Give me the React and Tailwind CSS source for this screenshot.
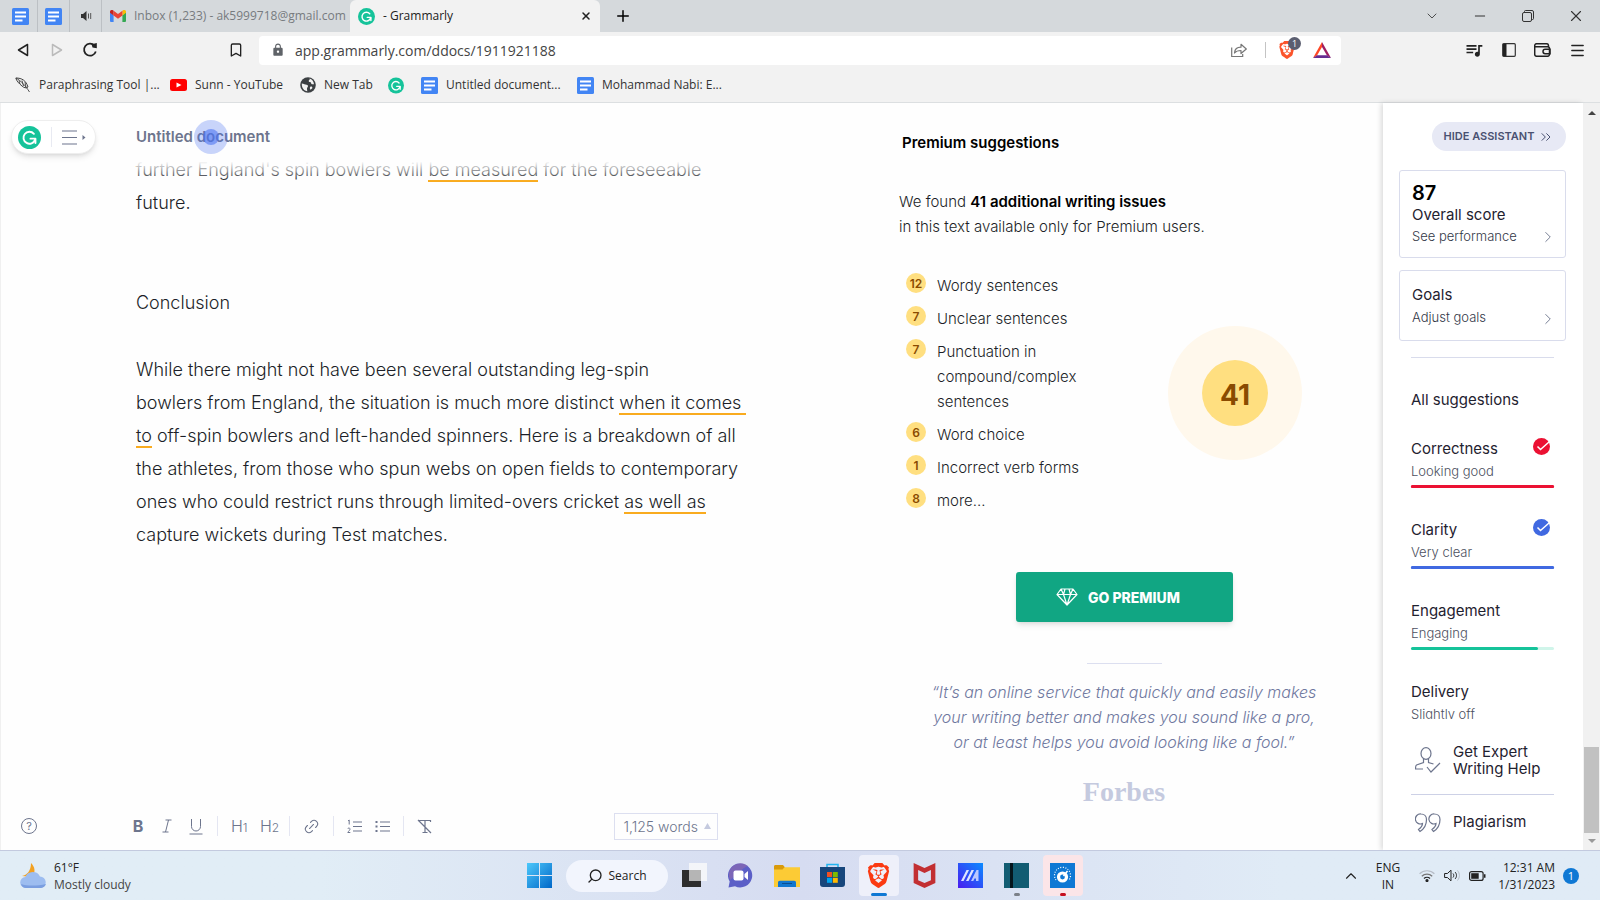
import {
    Bookmark,
    ChevronDown,
    ChevronRight,
    ChevronsRight,
    ChevronUp,
    Link2,
    Menu,
    Minus,
    Plus,
    Search,
    X,
} from "lucide-react";
import { SiBrave, SiMcafee } from "react-icons/si";
import { MdLock, MdOutlineQueueMusic } from "react-icons/md";

const GrammarlyLogo = ({ className }) => (
    <svg viewBox="0 0 24 24" className={className} aria-hidden="true">
        <circle cx="12" cy="12" r="12" fill="#15c39a" />
        <path
            d="M16.6 8.2A6.2 6.2 0 1 0 17.8 14.2"
            fill="none"
            stroke="#fff"
            strokeWidth="2"
            strokeLinecap="round"
        />
        <path d="M13 13.2h5.2v4.6" fill="none" stroke="#fff" strokeWidth="2" strokeLinecap="round" strokeLinejoin="round" />
    </svg>
);

const DocsIcon = () => (
    <svg viewBox="0 0 17 17" className="size-[17px] shrink-0" aria-hidden="true">
        <rect width="17" height="17" rx="1.5" fill="#4285f4" />
        <path d="M3 4.5h11M3 8.5h11M3 12.5h7.5" stroke="#fff" strokeWidth="1.8" />
    </svg>
);

const GmailIcon = () => (
    <svg viewBox="0 0 16 12" className="h-3 w-4 shrink-0" aria-hidden="true">
        <path d="M0 1.5V11a1 1 0 0 0 1 1h2.6V5.4Z" fill="#4285f4" />
        <path d="M16 1.5V11a1 1 0 0 1-1 1h-2.6V5.4Z" fill="#34a853" />
        <path d="M12.4.8v4.6L16 2.7v-1C16 .2 14.3-.5 13.1.3Z" fill="#fbbc04" />
        <path d="M3.6.8v4.6L0 2.7v-1C0 .2 1.7-.5 2.9.3Z" fill="#c5221f" />
        <path d="M3.6 5.4V.8L8 4.1 12.4.8v4.6L8 8.7Z" fill="#ea4335" />
    </svg>
);

const YoutubeIcon = () => (
    <svg viewBox="0 0 17 12" className="h-3 w-[17px] shrink-0" aria-hidden="true">
        <rect width="17" height="12" rx="2.5" fill="#f00" />
        <path d="m6.5 3.5 5 2.5-5 2.5Z" fill="#fff" />
    </svg>
);

const FeatherIcon = () => (
    <svg viewBox="0 0 16 16" className="size-4 shrink-0" fill="none" stroke="#444" aria-hidden="true">
        <path d="M.8 1C7 1 11 3.5 13 10c-2 1.5-4 .8-6-1C4 6.5 1.5 4 .8 1Z" strokeWidth="1" />
        <path d="M1 1c5 3 9 7 13.5 14M4 3.5l1 3.5M7 3.5 8.5 9M10 5l1 5.5" strokeWidth=".9" />
    </svg>
);

const GlobeIcon = () => (
    <svg viewBox="0 0 16 16" className="size-4 shrink-0" aria-hidden="true">
        <circle cx="8" cy="8" r="7.8" fill="#3c4043" />
        <path
            d="M1.8 6.5c2 .3 3.3 1 4.7 1.2 1.5.2 2 1.5 1 2.5-.8.7-.4 2-.2 4-3-.2-5.7-3-5.5-7.7ZM9.5 1.6c1 1-.8 1.4-.8 2.3 0 1.4 2.8.8 2.5 2.4-.2 1 .8 1.2 2.8 1-.2-2.8-2-5-4.5-5.7ZM11 9.5c1 0 1.5.6 1.3 1.7l-1.8 1.6c-1-1-.8-3.3.5-3.3Z"
            fill="#f2f2f2"
        />
    </svg>
);

const bookmarks = [
    { icon: <FeatherIcon />, label: "Paraphrasing Tool |...", width: "w-[138px]" },
    { icon: <YoutubeIcon />, label: "Sunn - YouTube", width: "w-[113px]" },
    { icon: <GlobeIcon />, label: "New Tab", width: "w-[71px]" },
    { icon: <GrammarlyLogo className="size-[17px]" />, label: "", width: "w-4" },
    { icon: <DocsIcon />, label: "Untitled document...", width: "w-[139px]" },
    { icon: <DocsIcon />, label: "Mohammad Nabi: E...", width: "w-[150px]" },
];

const TabStrip = () => (
    <header className="flex h-8 items-stretch bg-[#d5d9dc] text-[12px]">
        <button aria-label="Pinned document" className="flex w-[38px] items-center justify-center border-r border-[#bcc0c4] pl-1">
            <DocsIcon />
        </button>
        <button aria-label="Pinned document" className="flex w-8 items-center justify-center border-r border-[#bcc0c4]">
            <DocsIcon />
        </button>
        <button aria-label="Playing audio" className="flex w-8 items-center justify-center border-r border-[#bcc0c4]">
            <svg viewBox="0 0 12 12" className="size-3" aria-hidden="true">
                <path d="M1 4h2l3.5-3v10L3 8H1Z" fill="#333" />
                <path d="M8.5 3.5v5M10.7 3v6" stroke="#555" strokeWidth="1" />
            </svg>
        </button>
        <button className="flex w-[248px] items-center gap-2 overflow-hidden pl-2 whitespace-nowrap text-[#777b7f]">
            <GmailIcon />
            <span className="overflow-hidden">Inbox (1,233) - ak5999718@gmail.com</span>
        </button>
        <div className="flex w-[250px] items-center rounded-t-md bg-[#f2f2f2] px-2 text-[#222]">
            <GrammarlyLogo className="size-[17px]" />
            <span className="ml-2 flex-1">- Grammarly</span>
            <button aria-label="Close tab">
                <X size={12} strokeWidth={3} />
            </button>
        </div>
        <button aria-label="New tab" className="px-3.5">
            <Plus size={18} strokeWidth={2} />
        </button>
        <div className="ml-auto flex items-center text-[#333]">
            <button aria-label="Search tabs" className="flex w-12 justify-center">
                <ChevronDown size={16} strokeWidth={1.25} />
            </button>
            <button aria-label="Minimize" className="flex w-12 justify-center">
                <Minus size={16} strokeWidth={1.5} />
            </button>
            <button aria-label="Restore" className="flex w-12 justify-center">
                <svg viewBox="0 0 12 12" className="size-3" fill="none" stroke="currentColor" aria-hidden="true">
                    <rect x=".5" y="2.5" width="9" height="9" rx="1.5" />
                    <path d="M2.5 2V1.5a1 1 0 0 1 1-1H10A1.5 1.5 0 0 1 11.5 2v6.5a1 1 0 0 1-1 1H10" />
                </svg>
            </button>
            <button aria-label="Close" className="flex w-12 justify-center">
                <X size={18} strokeWidth={1.5} />
            </button>
        </div>
    </header>
);

const NavBar = () => (
    <nav className="flex h-9 items-center bg-[#f2f2f2] text-[#222]">
        <div className="flex w-[259px] items-center pr-[15px] pl-4">
            <button aria-label="Back" className="w-[34px]">
                <svg viewBox="0 0 14 14" className="size-3.5" aria-hidden="true">
                    <path d="M11.5 1.5v11L2.5 7Z" fill="none" stroke="#222" strokeWidth="1.5" strokeLinejoin="round" />
                </svg>
            </button>
            <button aria-label="Forward" className="w-8">
                <svg viewBox="0 0 14 14" className="size-3.5" aria-hidden="true">
                    <path d="M2.5 1.5v11l9-5.5Z" fill="none" stroke="#bbb" strokeWidth="1.5" strokeLinejoin="round" />
                </svg>
            </button>
            <button aria-label="Reload" className="flex-1">
                <svg viewBox="0 0 16 16" className="size-4" aria-hidden="true">
                    <path d="M12.5 3.6A6 6 0 1 0 13.8 9.5" fill="none" stroke="#222" strokeWidth="1.8" />
                    <path d="M9.5 2.2 14.8 1v5.2l-4.3-.6Z" fill="#222" />
                </svg>
            </button>
            <button aria-label="Bookmark this page">
                <Bookmark size={16} strokeWidth={2} />
            </button>
        </div>
        <div className="flex h-[29px] flex-1 items-center rounded-[4px] bg-white pr-2.5 pl-3">
            <MdLock size={14} color="#5f6368" />
            <input
                aria-label="Address"
                defaultValue="app.grammarly.com/ddocs/1911921188"
                className="ml-2.5 min-w-0 flex-1 bg-transparent text-[14px] text-[#444] outline-none"
            />
            <button aria-label="Share" className="mr-[18px]">
                <svg viewBox="0 0 16 16" className="size-4" fill="none" stroke="#777" strokeWidth="1.2" aria-hidden="true">
                    <path d="M.7 5.5v9h11v-2.5" />
                    <path d="M3.5 11c.3-4 2.5-5.8 6.5-5.8V2.3L15.3 7 10 11.5V8.5c-3 0-5 .6-6.5 2.5Z" strokeLinejoin="round" />
                </svg>
            </button>
            <span className="mr-3 h-4 w-px bg-[#c4c4c4]" />
            <button aria-label="Brave Shields" className="relative mr-[17px] w-[18px]">
                <SiBrave size={18} color="#fb542b" />
                <span className="absolute -top-1 left-2.5 flex size-[13px] items-center justify-center rounded-full bg-[#5b5e70] text-[9px] text-white">
                    1
                </span>
            </button>
            <button aria-label="Rewards">
                <svg viewBox="0 0 18 16" className="h-4 w-[18px]" aria-hidden="true">
                    <path d="M9 0 0 16l4-2.5L9 5Z" fill="#ff4724" />
                    <path d="m9 0 9 16-4-2.5L9 5Z" fill="#9e1f63" />
                    <path d="M0 16h18l-4-2.8H4Z" fill="#662d91" />
                </svg>
            </button>
        </div>
        <div className="flex w-[259px] items-center justify-end gap-[18px] pr-3.5">
            <button aria-label="Media controls">
                <MdOutlineQueueMusic size={20} />
            </button>
            <button aria-label="Sidebar">
                <svg viewBox="0 0 14 14" className="size-3.5" aria-hidden="true">
                    <rect x=".7" y=".7" width="12.6" height="12.6" rx="1" fill="none" stroke="#333" strokeWidth="1.2" />
                    <path d="M1 1h3.5v12H1Z" fill="#222" />
                </svg>
            </button>
            <button aria-label="Wallet">
                <svg viewBox="0 0 17 14" className="h-3.5 w-[17px]" fill="none" stroke="#222" strokeWidth="1.5" aria-hidden="true">
                    <path d="M14.5 3.8V2.7a2 2 0 0 0-2-2H2.7a2 2 0 0 0-2 2v8.6a2 2 0 0 0 2 2h10.8a2 2 0 0 0 2-2V5.7a2 2 0 0 0-2-2H1" />
                    <path d="M16 6.3h-4.8a2.2 2.2 0 0 0 0 4.4H16Z" />
                </svg>
            </button>
            <button aria-label="Menu">
                <Menu size={17} strokeWidth={2} />
            </button>
        </div>
    </nav>
);

const BookmarkBar = () => (
    <div className="flex h-[35px] items-center gap-[17px] border-b border-[#dcdfe1] bg-[#f2f2f2] pl-[15px] text-[12px] text-[#333]">
        {bookmarks.map((item, i) => (
            <a key={i} href="#" aria-label={item.label || "Grammarly"} className={`flex items-center gap-2 whitespace-nowrap ${item.width}`}>
                {item.icon}
                {item.label && <span>{item.label}</span>}
            </a>
        ))}
    </div>
);

const Mark = ({ children }) => <span className="border-b-2 border-[#f9ab1f]">{children}</span>;

const FormatBar = () => {
    const divider = <span className="h-5 w-px bg-[#e4e6f2]" />;
    return (
        <footer className="flex h-[48px] items-center pr-[181px] pl-5 text-[#6d758d]">
            <button
                aria-label="Help"
                className="mr-[93px] flex size-4 items-center justify-center rounded-full border border-[#6d758d] text-[11px]"
            >
                ?
            </button>
            <div className="flex flex-1 items-center gap-[13px] text-[16px]">
                <button aria-label="Bold" className="w-4 font-bold">B</button>
                <button aria-label="Italic" className="w-4">
                    <svg viewBox="0 0 10 14" className="mx-auto h-3.5 w-2.5" fill="none" stroke="currentColor" aria-hidden="true">
                        <path d="M3.5 1H9.5M.5 13h6M6.5 1l-3 12" />
                    </svg>
                </button>
                <button aria-label="Underline" className="w-4">
                    <svg viewBox="0 0 14 17" className="mx-auto h-[17px] w-3.5" fill="none" stroke="currentColor" aria-hidden="true">
                        <path d="M2.5 1v7.5a4.5 4.5 0 0 0 9 0V1M.5 16h13" />
                    </svg>
                </button>
                {divider}
                <button aria-label="Heading 1" className="w-4 font-light">H<span className="text-[12px]">1</span></button>
                <button aria-label="Heading 2" className="w-4 font-light">H<span className="text-[12px]">2</span></button>
                {divider}
                <button aria-label="Link">
                    <Link2 size={17} strokeWidth={1.5} className="-rotate-45" />
                </button>
                {divider}
                <button aria-label="Numbered list">
                    <svg viewBox="0 0 15 15" className="size-[15px]" stroke="currentColor" fill="none" aria-hidden="true">
                        <path d="M6 3h9M6 7.5h9M6 12h9M1 2l1.2-1v4.5M.8 10c.2-1.4 2.4-1.2 2.2.2C2.8 11.5 1.5 12 .8 13.5H3.3" />
                    </svg>
                </button>
                <button aria-label="Bulleted list">
                    <svg viewBox="0 0 15 15" className="size-[15px]" stroke="currentColor" aria-hidden="true">
                        <path d="M5 3h10M5 7.5h10M5 12h10" />
                        <path d="M.5 3h2M.5 7.5h2M.5 12h2" strokeWidth="2" />
                    </svg>
                </button>
                {divider}
                <button aria-label="Clear formatting">
                    <svg viewBox="0 0 15 15" className="size-[15px]" stroke="currentColor" fill="none" strokeWidth="1.2" aria-hidden="true">
                        <path d="M2.5 3V1.5h11V3M8 1.5v12M5.5 13.5h5M1 1l13 13" />
                    </svg>
                </button>
            </div>
            <button className="flex h-[27px] items-center gap-1.5 border border-[#dcdff0] pr-1.5 pl-2 text-[14px] font-light whitespace-nowrap">
                1,125 words
                <svg viewBox="0 0 7 6" className="h-1.5 w-[7px]" aria-hidden="true">
                    <path d="M3.5 0 7 6H0Z" fill="#c5cadf" />
                </svg>
            </button>
        </footer>
    );
};

const Editor = () => (
    <section className="flex min-w-0 flex-1 flex-col border-l border-[#f0f0f0]">
        <div className="flex h-[50px] items-center pt-[18px] pl-[10px]">
            <div className="flex h-[34px] w-[85px] shrink-0 items-center rounded-full border border-[#eee] bg-white pl-[6px] shadow-md">
                <GrammarlyLogo className="size-[23px]" />
                <span className="mx-2.5 h-5 w-px bg-[#e8eaf2]" />
                <button aria-label="Open menu" className="text-[#6d758d]">
                    <svg viewBox="0 0 24 15" className="h-[15px] w-[24px]" stroke="currentColor" strokeWidth="1.2" aria-hidden="true">
                        <path d="M0 1h15M0 7.5h15M0 14h15" />
                        <path d="M20.5 5v5l3-2.5Z" fill="currentColor" stroke="none" />
                    </svg>
                </button>
            </div>
            <h1 className="relative z-10 ml-10 text-[15px] font-semibold text-[#6d758d]">
                Untitled document
                <span className="absolute -top-1.5 left-[58px] flex size-[34px] items-center justify-center rounded-full bg-[#4c75f2]/30">
                    <span className="size-4 rounded-full bg-[#4c75f2]/60" />
                </span>
            </h1>
        </div>
        <div className="relative flex-1 pl-[135px] text-[18px] leading-[33px] font-light whitespace-nowrap text-[#1c1f28]">
            <div className="pointer-events-none absolute top-0 right-0 left-[135px] h-7 bg-linear-to-b from-[#fefefe] from-30% to-transparent" />
            <p>
                further England's spin bowlers will <Mark>be measured</Mark> for the foreseeable
                <br />
                future.
            </p>
            <h2 className="mt-[67px]">Conclusion</h2>
            <p className="mt-[34px]">
                While there might not have been several outstanding leg-spin
                <br />
                bowlers from England, the situation is much more distinct <Mark>when it comes&nbsp;</Mark>
                <br />
                <Mark>to</Mark> off-spin bowlers and left-handed spinners. Here is a breakdown of all
                <br />
                the athletes, from those who spun webs on open fields to contemporary
                <br />
                ones who could restrict runs through limited-overs cricket <Mark>as well as</Mark>
                <br />
                capture wickets during Test matches.
            </p>
        </div>
        <FormatBar />
    </section>
);

const issues = [
    [12, "Wordy sentences"],
    [7, "Unclear sentences"],
    [7, "Punctuation in compound/complex sentences"],
    [6, "Word choice"],
    [1, "Incorrect verb forms"],
    [8, "more..."],
];

const Premium = () => (
    <section className="w-[484px] shrink-0 pt-[27px] text-[15px] leading-[25px] font-light text-[#1c1f28]">
        <h2 className="pl-[3px] font-semibold text-black">Premium suggestions</h2>
        <p className="mt-[34px]">
            We found <strong className="font-semibold text-black">41 additional writing issues</strong>
            <br />
            in this text available only for Premium users.
        </p>
        <div className="mt-[34px] flex items-center pl-[7px]">
            <ul className="flex w-[206px] flex-col gap-2">
                {issues.map(([count, label]) => (
                    <li key={label} className="flex items-start gap-[11px]">
                        <span className="flex size-5 shrink-0 items-center justify-center rounded-full bg-[#ffdf80] text-[12px] font-semibold text-[#8a4b00]">
                            {count}
                        </span>
                        <span className="w-[150px]">{label}</span>
                    </li>
                ))}
            </ul>
            <div className="ml-14 flex size-[134px] items-center justify-center rounded-full bg-[#fff8ec]">
                <span className="flex size-[66px] items-center justify-center rounded-full bg-[#ffdf80] pt-1 text-[28px] font-bold text-[#8a4b00]">
                    41
                </span>
            </div>
        </div>
        <div className="flex w-[450px] flex-col items-center">
            <button className="mt-[59px] flex h-[50px] w-[217px] items-center justify-center gap-[10px] rounded-[3px] bg-[#11a683] pr-3 text-[14px] font-extrabold text-white shadow-md">
                <svg viewBox="0 0 22 18" className="h-[18px] w-[22px]" fill="none" stroke="#fff" strokeWidth="1.2" strokeLinejoin="round" aria-hidden="true">
                    <path d="M5 1h12l4 5.5L11 17 1 6.5ZM1 6.5h20M5 1l2.5 5.5L11 17l3.5-10.5L17 1M7.5 6.5 9 1M14.5 6.5 13 1" />
                </svg>
                GO PREMIUM
            </button>
            <hr className="mt-[41px] w-[75px] border-[#dcdff0]" />
            <blockquote className="mt-4 text-center text-[16px] whitespace-nowrap text-[#6f789f] italic">
                “It’s an online service that quickly and easily makes
                <br />
                your writing better and makes you sound like a pro,
                <br />
                or at least helps you avoid looking like a fool.”
            </blockquote>
            <p className="mt-6 font-['Liberation_Serif',serif] text-[28px] font-bold text-[#c5cadf]">Forbes</p>
        </div>
    </section>
);

const CheckBadge = ({ color }) => (
    <svg viewBox="0 0 17 17" className="size-[17px]" aria-hidden="true">
        <circle cx="8.5" cy="8.5" r="8.5" fill={color} />
        <path d="m4.5 8.5 3 3L16 4" fill="none" stroke="#fff" strokeWidth="1.5" />
    </svg>
);

const scores = [
    { name: "Correctness", note: "Looking good", color: "#eb1133", track: "#eb1133", percent: 100, done: true },
    { name: "Clarity", note: "Very clear", color: "#4069e1", track: "#4069e1", percent: 100, done: true },
    { name: "Engagement", note: "Engaging", color: "#15c39a", track: "#d0f5ea", percent: 89, done: false },
    { name: "Delivery", note: "Slightly off", color: "#8b46ff", track: "#e8daff", percent: 70, done: false },
];

const Assistant = () => (
    <aside className="flex w-[200px] shrink-0 flex-col overflow-hidden bg-white pt-[19px] pr-[17px] pl-4 text-[15px] text-[#1f2230] shadow-[-2px_0_5px_rgba(0,0,0,0.14)]">
        <button className="flex h-[29px] w-[134px] items-center justify-center gap-1 self-end rounded-full bg-[#e7e9f5] text-[11px] font-semibold whitespace-nowrap text-[#4a5171]">
            HIDE ASSISTANT
            <ChevronsRight size={16} strokeWidth={1.5} />
        </button>
        <button className="mt-[19px] flex h-[88px] items-end justify-between rounded-[3px] border border-[#d9dcec] px-3 pb-[11px] text-left">
            <span className="flex flex-col leading-[22px]">
                <strong className="text-[20px] font-semibold text-black">87</strong>
                Overall score
                <span className="text-[13px] leading-5 font-light text-[#333848]">See performance</span>
            </span>
            <ChevronRight size={18} strokeWidth={1.25} className="-mr-1 text-[#6d758d]" />
        </button>
        <button className="mt-3 flex h-[71px] items-end justify-between rounded-[3px] border border-[#d9dcec] px-3 pb-3 text-left">
            <span className="flex flex-col leading-[22px]">
                Goals
                <span className="text-[13px] font-light text-[#333848]">Adjust goals</span>
            </span>
            <ChevronRight size={18} strokeWidth={1.25} className="-mr-1 text-[#6d758d]" />
        </button>
        <div className="mt-4 flex min-h-0 flex-1 flex-col overflow-hidden px-3">
            <hr className="border-[#d9dcec]" />
            <h2 className="mt-[31px] leading-[22px]">All suggestions</h2>
            <ul className="mt-[27px] flex flex-col gap-[31px]">
                {scores.map((score) => (
                    <li key={score.name} className="flex flex-col">
                        <div className="flex h-[22px] items-start justify-between pr-1 leading-[22px]">
                            {score.name}
                            {score.done && <CheckBadge color={score.color} />}
                        </div>
                        <span className="text-[13px] leading-[22px] font-light text-[#4c5060]">{score.note}</span>
                        <span className="mt-[3px] flex h-[3px] rounded-full" style={{ background: score.track }}>
                            <span className="rounded-full" style={{ background: score.color, width: `${score.percent}%` }} />
                        </span>
                    </li>
                ))}
            </ul>
        </div>
        <div className="mx-3 mt-6 shrink-0">
            <button className="flex w-full items-center gap-3 border-b border-[#cdd1e6] pb-[17px] text-left leading-[17px] whitespace-nowrap">
                <svg viewBox="0 0 26 26" className="ml-1 size-[26px] shrink-0" fill="none" stroke="#6d758d" strokeWidth="1.2" aria-hidden="true">
                    <ellipse cx="11" cy="6.5" rx="5" ry="5.8" />
                    <path d="M8.5 12v3.5L1.5 18c-.8.5-1 2-1 4H8M13.5 12v3.5l5 1.5M12 20l4 5 9-9" />
                </svg>
                <span>
                    Get Expert
                    <br />
                    Writing Help
                </span>
            </button>
            <button className="flex h-[55px] w-full items-center gap-3 text-left">
                <svg viewBox="0 0 26 20" className="ml-1 h-5 w-[26px] shrink-0" fill="none" stroke="#6d758d" strokeWidth="1.2" aria-hidden="true">
                    <path d="M6 1a5 5 0 1 0 1.5 9.5C7.5 13 5.5 15 3.5 16.5l1.5 2c4-2.5 6.5-6.5 6.5-12C11.5 3 9 1 6 1ZM19.5 1a5 5 0 1 0 1.5 9.5c0 2.5-2 4.5-4 6l1.5 2c4-2.5 6.5-6.5 6.5-12C25 3 22.5 1 19.5 1Z" />
                </svg>
                Plagiarism
            </button>
        </div>
    </aside>
);

const PageScrollbar = () => (
    <div className="flex w-[17px] shrink-0 flex-col items-center justify-between bg-[#f1f1f1] pt-2" aria-hidden="true">
        <svg viewBox="0 0 8 4" className="h-1 w-2">
            <path d="M4 0 8 4H0Z" fill="#444" />
        </svg>
        <div className="flex w-full flex-col items-center gap-1.5 px-px pb-[7px]">
            <span className="h-[86px] w-full bg-[#c1c1c1]" />
            <svg viewBox="0 0 8 4" className="h-1 w-2">
                <path d="M4 4 8 0H0Z" fill="#999" />
            </svg>
        </div>
    </div>
);

const apps = [
    {
        name: "Task view",
        art: (
            <svg viewBox="0 0 25 25" className="size-[25px]">
                <rect y="7" width="19" height="17" fill="#2d2d2d" />
                <rect x="7" width="18" height="18" fill="#fafafa" opacity=".8" />
                <rect x="7" y="7" width="12" height="11" fill="#b5b5b5" />
            </svg>
        ),
    },
    {
        name: "Chat",
        art: (
            <svg viewBox="0 0 25 25" className="size-[25px]">
                <path d="M12.5.5a12 12 0 1 1-5.5 22.8L.5 24.5l1.2-6A12 12 0 0 1 12.5.5Z" fill="#5b5fc7" />
                <path d="M3 5a12 12 0 0 1 17-2C14 5 9 12 2 17A12 12 0 0 1 3 5Z" fill="#8a6ab0" opacity=".7" />
                <rect x="5.5" y="7.5" width="10" height="10" rx="2" fill="#fff" />
                <path d="m16.5 11 3.5-3v9l-3.5-3Z" fill="#fff" />
            </svg>
        ),
    },
    {
        name: "File Explorer",
        art: (
            <svg viewBox="0 0 26 24" className="h-6 w-[26px]">
                <path d="M0 2.5C0 1.5.7 1 1.5 1H9l2 2.5V7H0Z" fill="#d99a0b" />
                <path d="M0 5.5h8.5l2-2.3H26V23H0Z" fill="#fccb35" />
                <path d="M4 23v-4.5c0-1 .8-1.8 1.8-1.8h14.4c1 0 1.8.8 1.8 1.8V23Z" fill="#1176cf" />
                <path d="M8 19.5h10" stroke="#0a4c8f" />
            </svg>
        ),
    },
    {
        name: "Store",
        art: (
            <svg viewBox="0 0 25 25" className="size-[25px]">
                <path d="M7 5V1.5h11V5" fill="none" stroke="#22b4f0" strokeWidth="1.5" />
                <path d="M0 4h25v17a3 3 0 0 1-3 3H3a3 3 0 0 1-3-3Z" fill="#17467c" />
                <path d="M7 9h5v5H7Z" fill="#f25022" />
                <path d="M12.8 9h5v5h-5Z" fill="#7fba00" />
                <path d="M7 14.8h5v5H7Z" fill="#00a4ef" />
                <path d="M12.8 14.8h5v5h-5Z" fill="#ffb900" />
            </svg>
        ),
    },
    {
        name: "Brave",
        tile: "bg-[#eef0fa]",
        dot: "w-4 bg-[#0f78d4]",
        art: <SiBrave size={25} color="#fb3a12" />,
    },
    {
        name: "McAfee",
        art: <SiMcafee size={25} color="#c22f32" />,
    },
    {
        name: "MyASUS",
        art: (
            <svg viewBox="0 0 25 25" className="size-[25px]">
                <defs>
                    <linearGradient id="myasus" x1="0" y1="1" x2="1" y2="0">
                        <stop offset="0" stopColor="#4a1cf0" />
                        <stop offset="1" stopColor="#0a8bff" />
                    </linearGradient>
                </defs>
                <rect width="25" height="25" fill="url(#myasus)" />
                <path d="M3 18 8.5 7h2.5L5.5 18ZM8 18l5.5-11H16l-5.5 11Z" fill="#dfe4ff" />
                <path d="M13 18 18.500 7H20.500v11H18V15.500H16.500L15.300 18Z" fill="#b9c8ff" />
            </svg>
        ),
    },
    {
        name: "Notebook",
        dot: "w-1.5 bg-[#7b8088]",
        art: (
            <svg viewBox="0 0 25 25" className="size-[25px]">
                <rect width="25" height="25" fill="#125c72" />
                <path d="M6 0h3v25H6Z" fill="#05161c" />
            </svg>
        ),
    },
    {
        name: "Recorder",
        tile: "bg-[#fbe5e8]",
        dot: "w-1.5 bg-[#c50f1f]",
        art: (
            <svg viewBox="0 0 25 25" className="size-[25px]">
                <rect width="25" height="25" fill="#0f78d4" />
                <path d="M6 17a8 8 0 1 1 13 0" fill="none" stroke="#fff" strokeWidth="1.2" strokeDasharray="1 1.5" />
                <circle cx="12.5" cy="14" r="4" fill="none" stroke="#fff" strokeWidth="3.2" />
                <path d="m13.5 13 4-5" stroke="#fff" strokeWidth="1.6" />
            </svg>
        ),
    },
];

const Taskbar = () => (
    <footer className="flex h-[50px] shrink-0 items-center border-t border-[#c3cadf] bg-linear-to-r from-[#e1edf6] from-20% via-[#d6dcf1] to-[#e0ebf6] to-80% text-[12px] leading-[17px] text-[#222]">
        <button className="flex flex-1 items-center gap-[7px] pl-5 text-left">
            <svg viewBox="0 0 27 26" className="h-[26px] w-[27px]" aria-hidden="true">
                <path d="M11 0c4 4 5 9 1 14L2 13c5-1 9-5 9-13Z" fill="#f2a122" />
                <path d="M6 25a5.5 5.5 0 0 1-.6-11A8 8 0 0 1 20 13.5 5.8 5.8 0 0 1 21 25Z" fill="#9dbdf0" />
                <path d="M6 25a5.5 5.5 0 0 1-5-4c6 2 16 2 25 0a5.8 5.8 0 0 1-5 4Z" fill="#7a9ee0" />
            </svg>
            <span>
                61°F
                <br />
                <span className="text-[#444]">Mostly cloudy</span>
            </span>
        </button>
        <div className="flex items-center pl-2.5">
            <button aria-label="Start" className="mr-[14px]">
                <svg viewBox="0 0 25 25" className="size-[25px]" aria-hidden="true">
                    <defs>
                        <linearGradient id="start" x1="0" y1="0" x2="1" y2="1">
                            <stop offset="0" stopColor="#4cc8fb" />
                            <stop offset="1" stopColor="#0067c8" />
                        </linearGradient>
                    </defs>
                    <path d="M0 0h12v12H0ZM13 0h12v12H13ZM0 13h12v12H0ZM13 13h12v12H13Z" fill="url(#start)" />
                </svg>
            </button>
            <button className="mr-[7px] flex h-8 w-[102px] items-center justify-center gap-1.5 rounded-full bg-[#f2f5fd]">
                <Search size={16} strokeWidth={2} className="-scale-x-100" />
                Search
            </button>
            <div className="flex gap-[6px]">
                {apps.map((app) => (
                    <button
                        key={app.name}
                        aria-label={app.name}
                        className={`relative flex h-[41px] w-10 items-center justify-center rounded-[4px] ${app.tile ?? ""}`}
                    >
                        {app.art}
                        {app.dot && <span className={`absolute bottom-0 h-[3px] rounded-full ${app.dot}`} />}
                    </button>
                ))}
            </div>
        </div>
        <div className="flex flex-1 items-center justify-end pr-[21px] text-right">
            <button aria-label="Hidden icons" className="mr-4">
                <ChevronUp size={18} strokeWidth={1.5} />
            </button>
            <button className="mr-[19px] text-center">
                ENG
                <br />
                IN
            </button>
            <button aria-label="Network, volume and battery" className="mr-3 flex items-center gap-[9px]">
                <svg viewBox="0 0 16 13" className="h-[13px] w-4" fill="none" stroke="#222" strokeWidth="1.2">
                    <path d="M.6 4.8a10.5 10.5 0 0 1 14.8 0" stroke="#b5bbc5" />
                    <path d="M2.8 7.2a7.4 7.4 0 0 1 10.4 0" stroke="#777" />
                    <path d="M5 9.5a4.3 4.3 0 0 1 6 0" />
                    <circle cx="8" cy="11.5" r="1" fill="#222" />
                </svg>
                <svg viewBox="0 0 16 13" className="h-[13px] w-4" fill="none" stroke="#222">
                    <path d="M.6 4.5h2.8L7 1.2v10.6L3.4 8.5H.6Z" strokeLinejoin="round" />
                    <path d="M9 4.5c1 1.2 1 2.8 0 4M11 3c2 2 2 5 0 7" />
                    <path d="M13.5 1.5c2.5 3 2.5 7 0 10" stroke="#b5bbc5" />
                </svg>
                <svg viewBox="0 0 17 10" className="h-2.5 w-[17px]">
                    <rect x=".6" y=".6" width="13.5" height="8.8" rx="2" fill="none" stroke="#222" strokeWidth="1.2" />
                    <rect x="2.2" y="2.2" width="7.5" height="5.6" fill="#222" />
                    <path d="M15 3.3h1.5v3.4H15Z" fill="#222" />
                </svg>
            </button>
            <button className="mr-2 text-right">
                12:31 AM
                <br />
                1/31/2023
            </button>
            <button aria-label="1 notification" className="flex size-4 items-center justify-center rounded-full bg-[#0f78d4] text-[11px] text-white">
                1
            </button>
        </div>
    </footer>
);

const App = () => (
    <div className="flex h-screen flex-col bg-white font-['Open_Sans','Noto_Sans',sans-serif]">
        <TabStrip />
        <NavBar />
        <BookmarkBar />
        <main className="flex min-h-0 flex-1 bg-[#fefefe] font-['Inter',sans-serif]">
            <Editor />
            <Premium />
            <Assistant />
            <PageScrollbar />
        </main>
        <Taskbar />
    </div>
);

export default App;
